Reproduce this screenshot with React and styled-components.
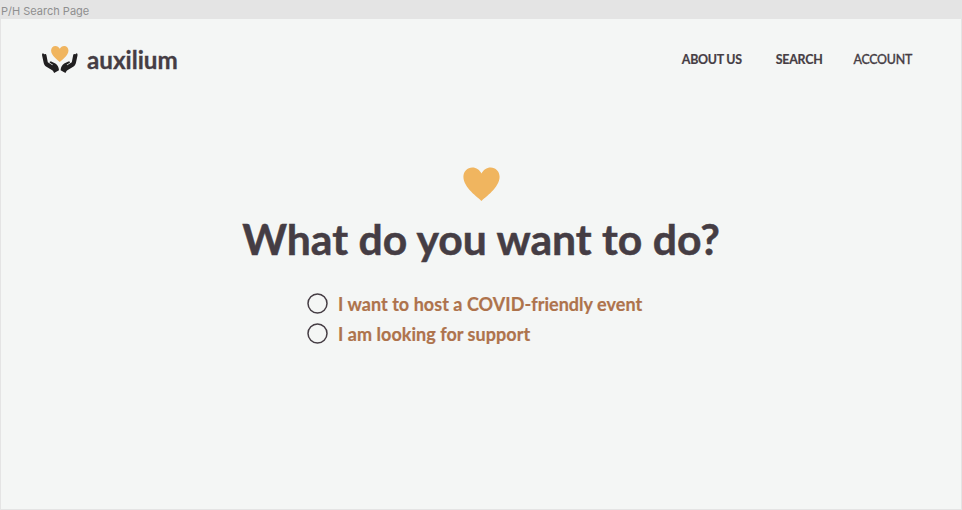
import React from "react";
import styled, { createGlobalStyle } from "styled-components";

const GlobalStyle = createGlobalStyle`
  * { box-sizing: border-box; }
  body { margin: 0; background: #e4e4e4; }
`;

const Canvas = styled.div`
  width: 962px;
  height: 510px;
  overflow: hidden;
  background: #e4e4e4;
  display: flex;
  flex-direction: column;
`;

const FrameLabel = styled.div`
  height: 19px;
  flex: none;
  padding: 4px 0 0 1px;
  font: 400 11px/14px Inter, sans-serif;
  color: #8f8f8f;
`;

const Frame = styled.main`
  flex: 1;
  margin: 0 1px 1px;
  background: #f4f6f5;
  color: #453d44;
  font-family: Lato, sans-serif;
`;

const Header = styled.header`
  height: 80px;
  display: flex;
  align-items: center;
  justify-content: space-between;
  padding: 0 49px 0 40px;
`;

const Brand = styled.div`
  display: flex;
  align-items: center;
  gap: 9px;
`;

const LogoMark = styled.svg`
  display: block;
  width: 37px;
  height: 30px;
`;

const BrandName = styled.span`
  padding-top: 1px;
  font-size: 24.2px;
  line-height: 30px;
  font-weight: 700;
  -webkit-text-stroke: 0.3px currentColor;
`;

const Nav = styled.nav`
  display: flex;
  padding-top: 1px;
  line-height: 16px;
`;

const NavLink = styled.a`
  font-size: 12.4px;
  letter-spacing: -0.25px;
  font-weight: ${(p) => p.$weight};
  margin-left: ${(p) => p.$gap}px;
  -webkit-text-stroke: ${(p) => p.$stroke}px currentColor;
`;

const Hero = styled.section`
  display: flex;
  flex-direction: column;
  align-items: center;
  padding-top: 68px;
`;

const HeroHeart = styled.svg`
  display: block;
  width: 37px;
  height: 34px;
`;

const Title = styled.h1`
  margin: 11px 0 0;
  font-size: 42.7px;
  line-height: 54px;
  font-weight: 700;
  white-space: nowrap;
  -webkit-text-stroke: 0.5px currentColor;
`;

const Options = styled.div`
  width: 348px;
  margin-top: 22px;
  display: flex;
  flex-direction: column;
`;

const Option = styled.label`
  height: 30px;
  display: flex;
  align-items: center;
  gap: 10px;
  font-size: 18px;
  font-weight: 700;
  letter-spacing: 0.04px;
  color: #ae734c;
  white-space: nowrap;
  -webkit-text-stroke: 0.2px currentColor;
`;

const OptionText = styled.span`
  padding-top: 1px;
`;

const RadioRing = styled.svg`
  width: 21px;
  height: 21px;
  flex: none;
  fill: none;
  stroke: #453d44;
  stroke-width: 1.5;
`;

const heartPath =
  "M18.5 34C15 30.6 0.4 20.5 0.4 9.8C0.4 4.3 4.4 0.4 9.3 0.4C13.4 0.4 16.8 2.8 18.5 6.6C20.2 2.8 23.6 0.4 27.7 0.4C32.6 0.4 36.6 4.3 36.6 9.8C36.6 20.5 22 30.6 18.5 34Z";
const handPath =
  "M2 9.3C1.1 9.4 1 10.5 1.1 11.5L2.6 18.5C3 20.2 3.6 21.6 5 22.6L10.8 25.9C12 26.7 12.5 27.4 13.1 28.9L18 26.2C17.7 22.9 16.6 20.7 14.4 19.4L10.2 17.6C8.9 17.1 8.3 17.9 8.8 18.7L11.9 20.8L11.5 21.2L6.8 18.3L5.5 11.4C5.2 10 4 9.6 3.6 10.4L3 10Z";

function Logo() {
  return (
    <LogoMark viewBox="0 0 37 30" aria-hidden="true">
      <path d={heartPath} fill="#f0b55f" transform="translate(9.9 1.7) scale(.48)" />
      <path d={handPath} fill="#201f20" />
      <path d={handPath} fill="#201f20" transform="translate(37.6 0) scale(-1 1)" />
    </LogoMark>
  );
}

function Radio() {
  return (
    <RadioRing viewBox="0 0 21 21" aria-hidden="true">
      <circle cx="10.5" cy="10.5" r="9.5" />
    </RadioRing>
  );
}

export default function App() {
  return (
    <Canvas>
      <GlobalStyle />
      <FrameLabel>P/H Search Page</FrameLabel>
      <Frame>
        <Header>
          <Brand>
            <Logo />
            <BrandName>auxilium</BrandName>
          </Brand>
          <Nav>
            <NavLink $weight={700} $gap={0} $stroke={0.2}>ABOUT US</NavLink>
            <NavLink $weight={700} $gap={34} $stroke={0.2}>SEARCH</NavLink>
            <NavLink $weight={500} $gap={31} $stroke={0.3}>ACCOUNT</NavLink>
          </Nav>
        </Header>
        <Hero>
          <HeroHeart viewBox="0 0 37 34" aria-hidden="true">
            <path d={heartPath} fill="#f0b55f" />
          </HeroHeart>
          <Title>What do you want to do?</Title>
          <Options>
            <Option>
              <Radio />
              <OptionText>I want to host a COVID-friendly event</OptionText>
            </Option>
            <Option>
              <Radio />
              <OptionText>I am looking for support</OptionText>
            </Option>
          </Options>
        </Hero>
      </Frame>
    </Canvas>
  );
}
